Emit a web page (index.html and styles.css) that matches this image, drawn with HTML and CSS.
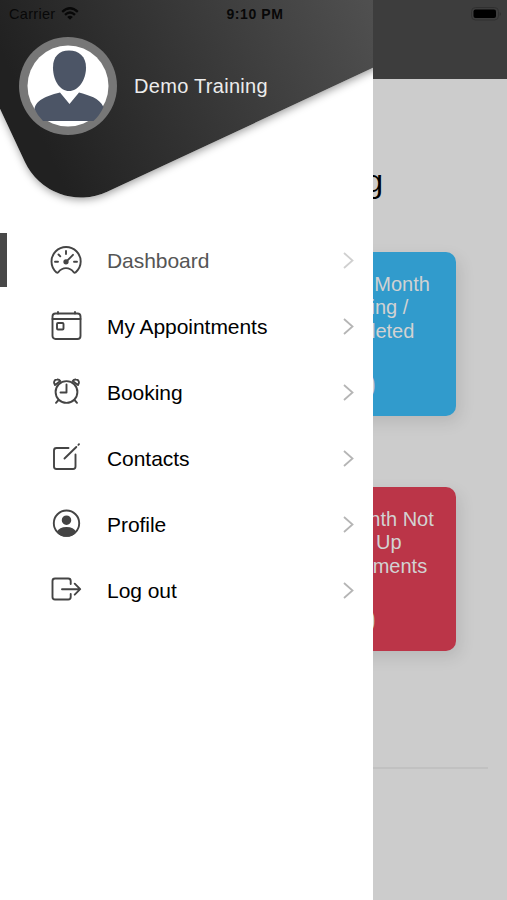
FILE: index.html
```html
<!DOCTYPE html>
<html lang="en">
<head>
    <meta charset="UTF-8">
    <meta name="viewport" content="width=device-width, initial-scale=1.0">
    <title>Dashboard</title>
    <link rel="stylesheet" href="styles.css">
</head>
<body>
    <main class="page">
        <div class="navbar"></div>
        <h1>Demo Training</h1>
        <div class="card blue">
            <p>Current Month Pending / Completed</p>
            <strong>0</strong>
        </div>
        <div class="card red">
            <p>This Month Not Sign Up Appointments</p>
            <strong>0</strong>
        </div>
        <hr>
    </main>

    <aside class="drawer">
        <div class="shape"></div>
        <div class="user">
            <svg class="avatar" viewBox="0 0 98 98">
                <circle cx="49" cy="49" r="49" fill="#777"/>
                <circle cx="49" cy="49" r="40.5" fill="#fff"/>
                <path d="M50 13.500c10 0 17 6 17 17 0 13-8 23.500-17 23.500s-16-10.500-16-23.500c0-11 6-17 16-17z" fill="#4c5566"/>
                <path d="M41 55.500l9.500 11.500 9.500-11.500c10 3 20 5 24.500 14.500a40.500 40.500 0 0 1-10 14H24a40.500 40.500 0 0 1-8.500-12C17 62 31 58 41 55.500z" fill="#4c5566"/>
            </svg>
            <span>Demo Training</span>
        </div>
        <nav>
            <a class="active">
                <svg class="icon" viewBox="0 0 36 36">
                    <path d="M8.500 30.500C5 27.500 3.500 24 3.500 19.600a14.600 14.600 0 0 1 29.200 0C32.700 24 31 27.500 27.500 30.500q-1 .6-1.800-.3c-4-5.500-11.400-5.500-15.400 0q-.8.900-1.800.3z"/>
                    <path d="M18 9v3M10.500 12.500l1.800 1.800M7 19.800h3M26 19.800h3M18 19.800l7-7"/>
                    <circle cx="18" cy="19.800" r="1.700" class="solid"/>
                </svg>
                <span>Dashboard</span>
                <svg class="arrow" viewBox="0 0 11 17"><path d="M1 1l8.500 7.500L1 16"/></svg>
            </a>
            <a>
                <svg class="icon" viewBox="0 0 36 36">
                    <rect x="4.500" y="5.500" width="28" height="25.500" rx="3"/>
                    <path d="M4.500 11h28M10 4v1.500M27 4v1.500"/>
                    <rect x="9" y="15" width="6.500" height="6.500" rx="1"/>
                </svg>
                <span>My Appointments</span>
                <svg class="arrow" viewBox="0 0 11 17"><path d="M1 1l8.500 7.500L1 16"/></svg>
            </a>
            <a>
                <svg class="icon" viewBox="0 0 36 36">
                    <circle cx="18.500" cy="18" r="10.900"/>
                    <path d="M18.500 10.500v8h-6M10.500 26L8 28.800M26.500 26l2.500 2.800"/>
                    <path d="M7 11C4.800 8.500 6.500 5.500 9 5.500q2.200-.2 3.300 1.500zM30 11C32.200 8.500 30.500 5.500 28 5.500q-2.200-.2-3.300 1.500z"/>
                </svg>
                <span>Booking</span>
                <svg class="arrow" viewBox="0 0 11 17"><path d="M1 1l8.500 7.500L1 16"/></svg>
            </a>
            <a>
                <svg class="icon" viewBox="0 0 36 36">
                    <path d="M20.500 8H8.500q-2.500 0-2.500 2.500v16q0 2.500 2.500 2.500h16.500q2.500 0 2.500-2.500V14.500"/>
                    <path d="M16.500 18.500L28.300 7M30.400 4.800l.6-.6"/>
                </svg>
                <span>Contacts</span>
                <svg class="arrow" viewBox="0 0 11 17"><path d="M1 1l8.500 7.500L1 16"/></svg>
            </a>
            <a>
                <svg class="icon" viewBox="0 0 36 36">
                    <circle cx="18.500" cy="17.200" r="12.700"/>
                    <circle cx="18.500" cy="14.200" r="3.800" class="solid"/>
                    <path d="M9.800 26.200q2-4.200 8.700-4.200t8.700 4.200q-3.700 3.600-8.700 3.600T9.800 26.200z" class="solid"/>
                </svg>
                <span>Profile</span>
                <svg class="arrow" viewBox="0 0 11 17"><path d="M1 1l8.500 7.500L1 16"/></svg>
            </a>
            <a>
                <svg class="icon" viewBox="0 0 36 36">
                    <path d="M22.700 12V9q0-2.500-2.500-2.500H7Q4.500 6.500 4.500 9v16q0 2.500 2.500 2.500h13.200q2.500 0 2.500-2.500v-3"/>
                    <path d="M14 17.200h18M26.700 11.700l5.500 5.500-5.500 5.500"/>
                </svg>
                <span>Log out</span>
                <svg class="arrow" viewBox="0 0 11 17"><path d="M1 1l8.500 7.500L1 16"/></svg>
            </a>
        </nav>
    </aside>

    <header class="status">
        <div class="carrier">
            <span>Carrier</span>
            <svg width="18" height="13" viewBox="0 0 18 13">
                <path d="M1.200 4.800q7.800-7 15.600 0M4 7.800q5-4.500 10 0" fill="none" stroke="#080808" stroke-width="2.300"/>
                <path d="M6.200 10q2.800-2.400 5.600 0L9 12.800z" fill="#080808"/>
            </svg>
        </div>
        <b>9:10 PM</b>
        <svg class="battery" width="30" height="14" viewBox="0 0 30 14">
            <rect x=".5" y=".5" width="27" height="12.500" rx="4" fill="none" stroke="#303030"/>
            <rect x="2.500" y="2.500" width="22.500" height="8.500" rx="2" fill="#000"/>
            <path d="M28.800 5q1.500 2 0 4z" fill="#252525"/>
        </svg>
    </header>
</body>
</html>
```
FILE: styles.css
```css
* {
    box-sizing: border-box;
}
body {
    margin: 0;
    position: relative;
    height: 900px;
    overflow: hidden;
    font-family: "Liberation Sans", Arial, sans-serif;
    background: #ccc;
}
.page {
    display: flex;
    flex-direction: column;
    align-items: flex-end;
    height: 900px;
}
.navbar {
    width: 100%;
    height: 79px;
    background: #3d3d3d;
}
h1 {
    margin: 82px 124px 0 0;
    font-size: 32px;
    line-height: 40px;
    font-weight: normal;
}
.card {
    width: 180px;
    height: 164px;
    margin-right: 51px;
    padding-top: 21px;
    border-radius: 10px;
    text-align: center;
    color: #d2d2d2;
    box-shadow: 4px 6px 16px rgba(0, 0, 0, 0.1);
}
.card p {
    width: 140px;
    margin: 0 auto;
    font-size: 20px;
    line-height: 23.3px;
}
.card strong {
    display: block;
    margin-top: 23px;
    font-size: 35px;
    line-height: 40px;
}
.blue {
    margin-top: 51px;
    background: #319bcc;
}
.red {
    margin-top: 71px;
    background: #bb3548;
}
hr {
    width: 470px;
    height: 2px;
    margin: 116px 19px 0 0;
    border: none;
    background: #c1c1c1;
}

/* side menu */
.drawer {
    position: absolute;
    top: 0;
    left: 0;
    width: 373px;
    height: 900px;
    overflow: hidden;
    background: #fff;
}
.shape {
    position: absolute;
    left: 51px;
    top: -82px;
    width: 450px;
    height: 300px;
    border-radius: 0 0 0 62px;
    background: linear-gradient(to right, #212121 25px, #525252 400px);
    box-shadow: 0 2px 8px rgba(0, 0, 0, 0.4);
    transform: rotate(-25deg);
    transform-origin: 0 100%;
}
.user {
    position: relative;
    display: flex;
    align-items: center;
    gap: 17px;
    padding: 37px 0 0 19px;
    font-size: 20px;
    letter-spacing: 0.3px;
    color: #ececec;
}
.avatar {
    width: 98px;
    height: 98px;
}
nav {
    margin-top: 92px;
}
nav a {
    display: flex;
    align-items: center;
    position: relative;
    height: 66px;
    padding: 0 19px 0 48px;
    font-size: 21px;
    letter-spacing: -0.05px;
    color: #000;
}
nav a span {
    flex: 1;
    margin-left: 23px;
    padding-top: 1px;
}
nav .active {
    color: #555;
}
nav .active::before {
    content: "";
    position: absolute;
    left: 0;
    top: 6px;
    width: 7px;
    height: 54px;
    background: #484848;
}
.icon {
    width: 36px;
    height: 36px;
    fill: none;
    stroke: #444;
    stroke-width: 1.9;
    stroke-linecap: round;
    stroke-linejoin: round;
}
.icon .solid {
    fill: #444;
}
.arrow {
    width: 11px;
    height: 17px;
    fill: none;
    stroke: #b5b5b5;
    stroke-width: 1.8;
}
.active .arrow {
    stroke: #d0d0d0;
}

.status {
    position: absolute;
    top: 0;
    left: 0;
    width: 507px;
    height: 27px;
    display: grid;
    grid-template-columns: 1fr auto 1fr;
    align-items: center;
    padding: 0 6px 0 9px;
    font-size: 14.5px;
    color: #080808;
}
.carrier {
    display: flex;
    align-items: center;
    gap: 6px;
    letter-spacing: 0.3px;
}
.status b {
    font-size: 14px;
    letter-spacing: 0.6px;
}
.battery {
    justify-self: end;
}
```
